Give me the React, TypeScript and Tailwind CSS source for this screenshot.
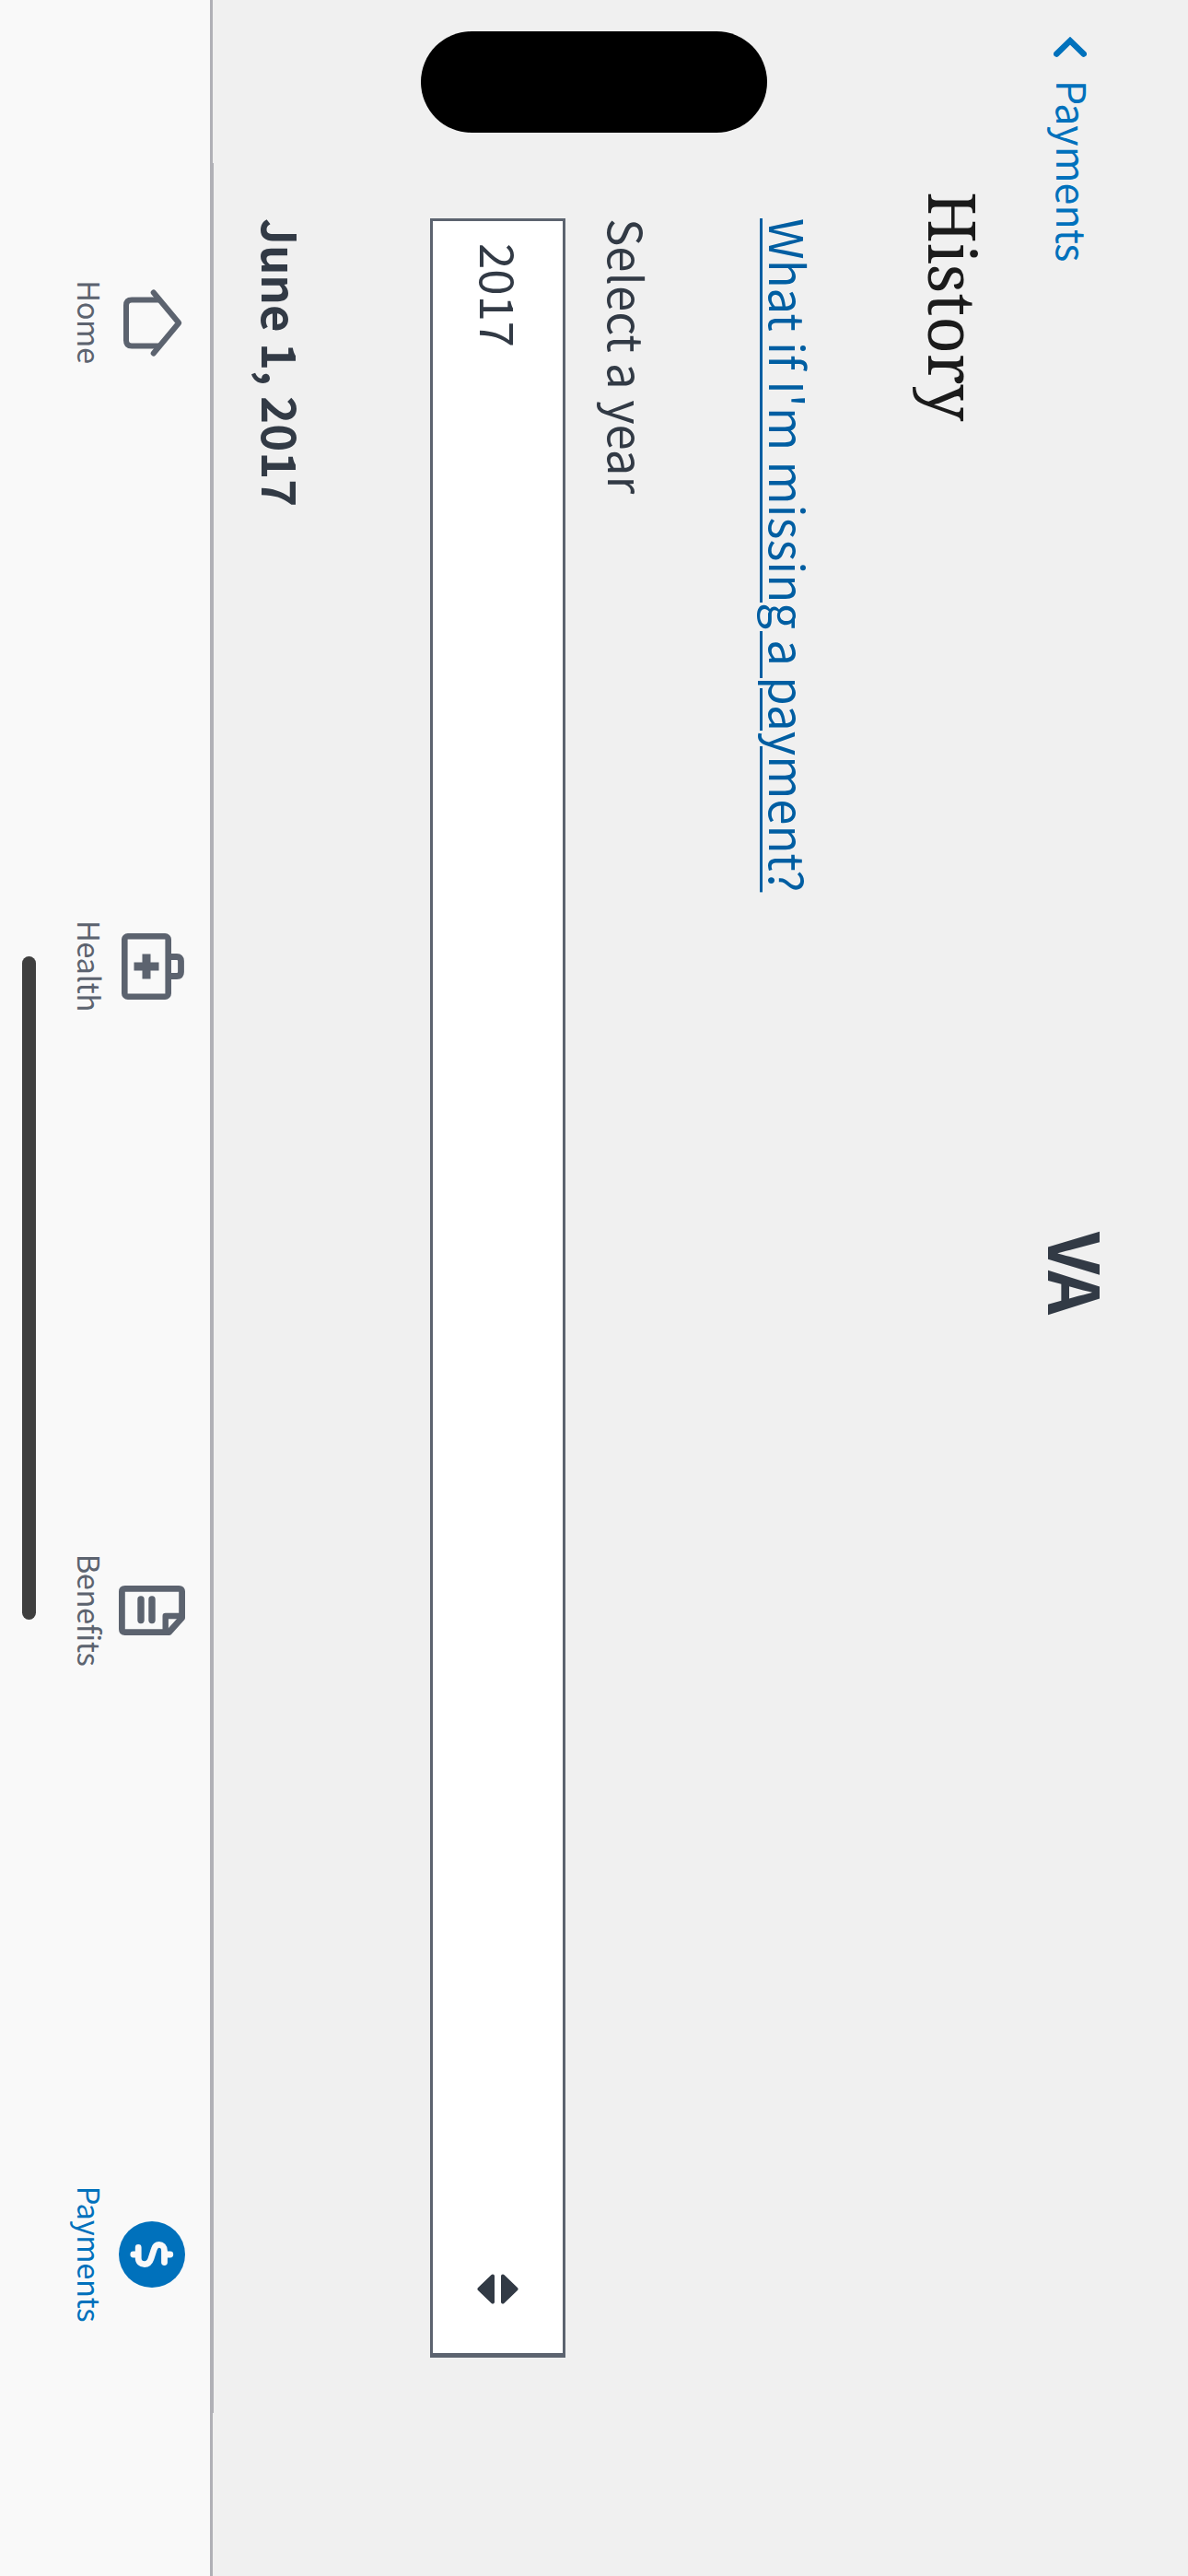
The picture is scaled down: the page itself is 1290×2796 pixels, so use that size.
import React from 'react';

const SANS = "font-['Noto_Sans_CJK_SC','Noto_Sans',sans-serif]";

function HomeIcon() {
  return (
    <svg viewBox="0 0 72 72" className="size-[72px] overflow-visible" fill="none" stroke="currentColor" strokeWidth="6">
      <path d="M11.5 27V58Q11.5 64 17.5 64H55.5Q61.5 64 61.5 58V27" />
      <path d="M3.5 34.3 36.5 6.8 69.5 34.3" strokeLinecap="round" strokeLinejoin="round" />
    </svg>
  );
}

function HealthIcon() {
  return (
    <svg viewBox="0 0 72 72" className="size-[72px] overflow-visible" fill="none" stroke="currentColor">
      <rect x="3.3" y="18.3" width="65.4" height="47.4" rx="3.5" strokeWidth="6.6" />
      <path d="M25.5 17V9Q25.5 4.5 30 4.5H42Q46.5 4.5 46.5 9V17" strokeWidth="6.8" />
      <path d="M36 28.5v27M22.5 42h27" strokeWidth="9" />
    </svg>
  );
}

function BenefitsIcon() {
  return (
    <svg viewBox="0 0 72 72" className="size-[72px] overflow-visible" fill="none" stroke="currentColor" strokeLinejoin="round">
      <path d="M15.5 3.4H44L59.6 17.5V65.3Q59.6 68.6 56.3 68.6H15.7Q12.4 68.6 12.4 65.3V6.7Q12.4 3.4 15.7 3.4Z" strokeWidth="6.8" />
      <path d="M42 4V21.3H59" strokeWidth="6.4" />
      <path d="M24 36H46.5M24 48H46.5" strokeWidth="7.4" strokeLinecap="round" />
    </svg>
  );
}

function PaymentsIcon() {
  return (
    <svg viewBox="0 0 72 72" className="size-[72px]" fill="none">
      <circle cx="36" cy="36" r="36" fill="currentColor" />
      <path d="M36 16.2V20M36 52V56.2" stroke="#f9f9f9" strokeWidth="6.8" strokeLinecap="round" />
      <path
        d="M44.5 22.5H32C27.5 22.5 25.4 25 25.4 28.3C25.4 31.8 27.6 33 30.5 33.8L40.5 37C43.8 38.1 46.6 39.8 46.6 44C46.6 48 44 50.8 40 50.8H28.5"
        stroke="#f9f9f9"
        strokeWidth="6.8"
        strokeLinecap="round"
      />
    </svg>
  );
}

const tabs = [
  { label: 'Home', Icon: HomeIcon, color: 'text-[#5c636f]' },
  { label: 'Health', Icon: HealthIcon, color: 'text-[#5c636f]' },
  { label: 'Benefits', Icon: BenefitsIcon, color: 'text-[#5c636f]' },
  { label: 'Payments', Icon: PaymentsIcon, color: 'text-[#0071bc]' },
];

export default function App() {
  return (
    <div className="relative h-[2796px] w-[1290px] overflow-hidden bg-[#f0f0f0]">
      {/* Landscape screen turned a quarter turn clockwise */}
      <div
        className={`flex h-[1290px] w-[2796px] origin-top-left translate-x-[1290px] rotate-90 flex-col bg-[#f0f0f0] text-[#323a45] ${SANS}`}
      >
        <header className="grid h-[200px] shrink-0 grid-cols-3 items-center pt-[48px]">
          <div className="flex items-center pl-[40px] text-[#0071bc]">
            <svg viewBox="0 0 22 36" className="mt-[8px] h-[36px] w-[22px]" fill="none" stroke="currentColor" strokeWidth="6.4">
              <path d="M18.6 3.2 4.2 18 18.6 32.8" strokeLinecap="round" />
            </svg>
            <span className="ml-[25px] text-[43px] leading-[60px]">Payments</span>
          </div>
          <div className="flex justify-center">
            <span className="mr-[35px] -mt-[8px] text-[75px] leading-[80px] font-bold tracking-[-3px]">VA</span>
          </div>
        </header>

        <main className="relative flex flex-1 flex-col items-start pr-[237px] pl-[237px]">
          <h1 className="mt-[15px] ml-[-29px] font-['Noto_Serif','DejaVu_Serif_Condensed','DejaVu_Serif',serif] text-[70.6px] leading-[80px] text-[#1b1b1b]">
            History
          </h1>
          <a className="mt-[108px] text-[50.88px] leading-[60px] text-[#005ea2] underline decoration-[3px] underline-offset-[7px]">
            What if I'm missing a payment?
          </a>
          <label className="mt-[115px] text-[50.88px] leading-[60px]">Select a year</label>
          <div className="mt-[38px] flex h-[147px] w-full items-center justify-between border-[3px] border-r-[5px] border-[#5c636f] bg-white pr-[53px] pb-[6px] pl-[24px]">
            <span className="text-[50.88px] leading-[60px]">2017</span>
            <svg viewBox="0 0 33 45" className="mt-[6px] h-[45px] w-[33px]" fill="currentColor" stroke="currentColor" strokeWidth="4" strokeLinejoin="round">
              <path d="M2.5 17 16.5 2.5 30.5 17ZM2.5 28 16.5 42.5 30.5 28Z" />
            </svg>
          </div>
          <h2 className="mt-[131px] text-[50.88px] leading-[60px] font-bold">June 1, 2017</h2>
        </main>

        <footer className="relative flex h-[231px] shrink-0 flex-col border-t-[3px] border-[#b0b0b6] bg-[#f9f9f9]">
          <div className="absolute -top-[4px] right-[177px] left-[177px] h-px bg-[#b0b0b6]" />
          <nav className="flex pt-[27px]">
            {tabs.map(({ label, Icon, color }) => (
              <div key={label} className={`flex flex-1 flex-col items-center ${color}`}>
                <Icon />
                <span className="mt-[11px] text-[32.7px] leading-[40px] tracking-[-0.35px]">{label}</span>
              </div>
            ))}
          </nav>
          <div className="mx-auto mt-[39px] h-[15px] w-[720px] rounded-full bg-[#3f3f3f]" />
        </footer>

        <div className="absolute top-[457px] left-[33.5px] h-[376px] w-[110.5px] rounded-[55px] bg-black" />
      </div>
    </div>
  );
}
